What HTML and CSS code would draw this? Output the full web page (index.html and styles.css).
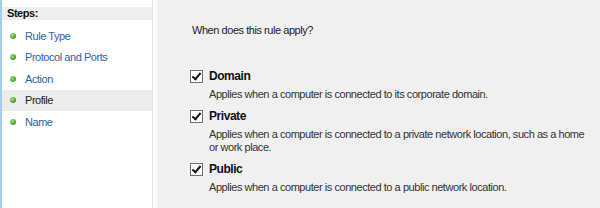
FILE: index.html
```html
<!DOCTYPE html>
<html lang="en">
<head>
    <meta charset="UTF-8">
    <title>New Inbound Rule Wizard - Profile</title>
    <link rel="stylesheet" href="styles.css">
</head>
<body>
    <div class="wizard">
        <div class="steps">
            <div class="steps-title">Steps:</div>
            <ul class="step-list">
                <li class="step"><span class="dot"></span>Rule Type</li>
                <li class="step"><span class="dot"></span>Protocol and Ports</li>
                <li class="step"><span class="dot"></span>Action</li>
                <li class="step current"><span class="dot"></span>Profile</li>
                <li class="step"><span class="dot"></span>Name</li>
            </ul>
        </div>
        <div class="page">
            <p class="question">When does this rule apply?</p>
            <div class="option">
                <label class="option-label"><span class="check"></span>Domain</label>
                <p class="option-desc">Applies when a computer is connected to its corporate domain.</p>
            </div>
            <div class="option">
                <label class="option-label"><span class="check"></span>Private</label>
                <p class="option-desc">Applies when a computer is connected to a private network location, such as a home or work place.</p>
            </div>
            <div class="option">
                <label class="option-label"><span class="check"></span>Public</label>
                <p class="option-desc">Applies when a computer is connected to a public network location.</p>
            </div>
        </div>
    </div>
</body>
</html>
```

FILE: styles.css
```css
:root {
    --panel: #f0f0f0;
    --link: #2b64a0;
    --text: #222222;
}

body {
    margin: 0;
    padding: 0;
    background: var(--panel);
    font-family: 'Liberation Sans', Arial, sans-serif;
    font-size: 11px;
    letter-spacing: -0.45px;
    color: var(--text);
}

.wizard {
    display: flex;
    height: 208px;
}

.steps {
    width: 153px;
    background: #ffffff;
    border-left: 2px solid #a9cde6;
    border-right: 1px solid #e4e4e4;
    padding-top: 7px;
    box-sizing: border-box;
}

.steps-title {
    background: #efefef;
    color: #111;
    font-weight: bold;
    height: 13px;
    line-height: 13px;
    padding-left: 5px;
}

.step-list {
    list-style: none;
    margin: 0;
    padding: 5px 0 0;
}

.step {
    height: 21.5px;
    display: flex;
    align-items: center;
    color: var(--link);
    padding-left: 8px;
}

.step.current {
    background: #ececec;
    color: var(--text);
}

.dot {
    width: 6px;
    height: 6px;
    border-radius: 50%;
    background: radial-gradient(circle at 35% 35%, #a6e07a, #3f9b2a 70%);
    margin-right: 9px;
}

.page {
    flex: 1;
    border-left: 4px solid #fafafa;
    padding: 24px 0 0 33px;
}

.question {
    margin: 0 0 33px 2px;
}

.option {
    margin-bottom: 8px;
}

.option-label {
    display: flex;
    align-items: center;
    height: 14px;
    font-weight: bold;
    font-size: 12px;
    color: #111;
}

.check {
    width: 11px;
    height: 11px;
    border: 1px solid #707070;
    background: #ffffff;
    margin-right: 6px;
    position: relative;
}

.check::after {
    content: '';
    position: absolute;
    left: 3px;
    top: 0px;
    width: 3px;
    height: 7px;
    border: solid #111;
    border-width: 0 2px 2px 0;
    transform: rotate(40deg);
}

.option-desc {
    margin: 5px 0 0 19px;
    line-height: 13px;
    width: 382px;
    color: #333;
}
```
